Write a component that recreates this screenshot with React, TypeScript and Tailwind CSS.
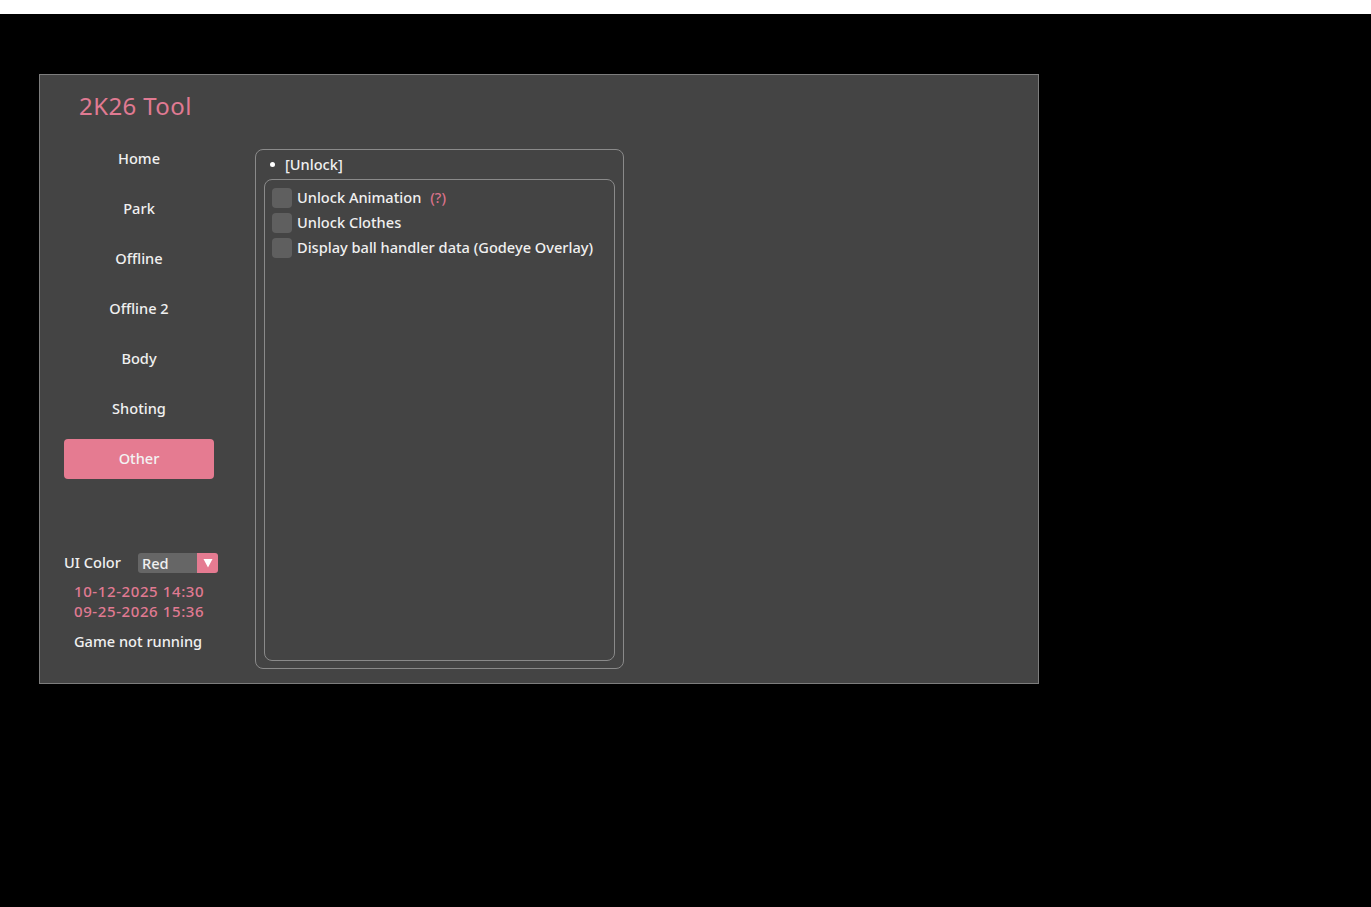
import React from "react";

const navItems = ["Home", "Park", "Offline", "Offline 2", "Body", "Shoting"];

export default function App() {
  return (
    <div className="w-[1371px] h-[907px] bg-black flex flex-col" style={{ fontFamily: "'Noto Sans', 'Open Sans', sans-serif" }}>
      <div className="h-[14px] bg-white shrink-0" />
      <div className="pl-[39px] pt-[60px]">
        <div className="w-[1000px] h-[610px] bg-[#444444] border border-[#7d7d7d] flex">
          <div className="w-[215px] shrink-0 flex flex-col">
            <div className="pl-[39px] pt-[16px] h-[64px] text-[24px] tracking-[0.4px] text-[#e07a92] leading-[30px]">2K26 Tool</div>
            <div className="flex flex-col pl-[24px]">
              {navItems.map((n) => (
                <div key={n} className="w-[150px] h-[40px] mb-[10px] flex items-center justify-center text-[14.6px] font-medium text-[#f0f0f0]">{n}</div>
              ))}
              <div className="w-[150px] h-[40px] rounded-[4px] bg-[#e57b91] flex items-center justify-center text-[14.6px] font-medium text-[#f3f3f3]">Other</div>
            </div>
            <div className="pl-[24px] pt-[74px] flex flex-col">
              <div className="flex items-center h-[20px]">
                <span className="text-[14.6px] font-medium text-[#f0f0f0] w-[74px]">UI Color</span>
                <div className="flex h-[20px] w-[80px] rounded-[3px] overflow-hidden">
                  <div className="flex-1 bg-[#666666] text-[14.6px] font-medium text-[#f0f0f0] pl-[4px] leading-[20px]">Red</div>
                  <div className="w-[21px] bg-[#e57b91] flex items-center justify-center">
                    <svg width="10" height="10" viewBox="0 0 10 10"><path d="M0.5 1 L9.5 1 L5 9.5 Z" fill="#ffffff" /></svg>
                  </div>
                </div>
              </div>
              <div className="pl-[10px] pt-[8px] text-[15px] tracking-[0.6px] font-medium leading-[20px] text-[#e07a92]">
                <div>10-12-2025 14:30</div>
                <div>09-25-2026 15:36</div>
              </div>
              <div className="pl-[10px] pt-[10px] text-[14.6px] font-medium leading-[20px] text-[#f0f0f0]">Game not running</div>
            </div>
          </div>
          <div className="pt-[74px]">
            <div className="w-[369px] h-[520px] border border-[#8a8a8a] rounded-[8px] flex flex-col px-[8px] pb-[7px]">
              <div className="h-[29px] flex items-center pl-[6px] text-[14.6px] font-medium text-[#f0f0f0]">
                <span className="w-[5px] h-[5px] rounded-full bg-white mr-[10px]" />
                [Unlock]
              </div>
              <div className="flex-1 border border-[#8a8a8a] rounded-[8px] pt-[8px] px-[7px] flex flex-col gap-[5px]">
                {[
                  ["Unlock Animation", true],
                  ["Unlock Clothes", false],
                  ["Display ball handler data (Godeye Overlay)", false],
                ].map(([t, q]) => (
                  <div key={t as string} className="flex items-center h-[20px]">
                    <div className="w-[20px] h-[20px] rounded-[4px] bg-[#5f5f5f] mr-[5px]" />
                    <span className="text-[14.6px] font-medium text-[#f0f0f0]">{t as string}</span>
                    {q && <span className="text-[14.6px] font-medium text-[#d9728a] ml-[9px]">(?)</span>}
                  </div>
                ))}
              </div>
            </div>
          </div>
        </div>
      </div>
    </div>
  );
}
